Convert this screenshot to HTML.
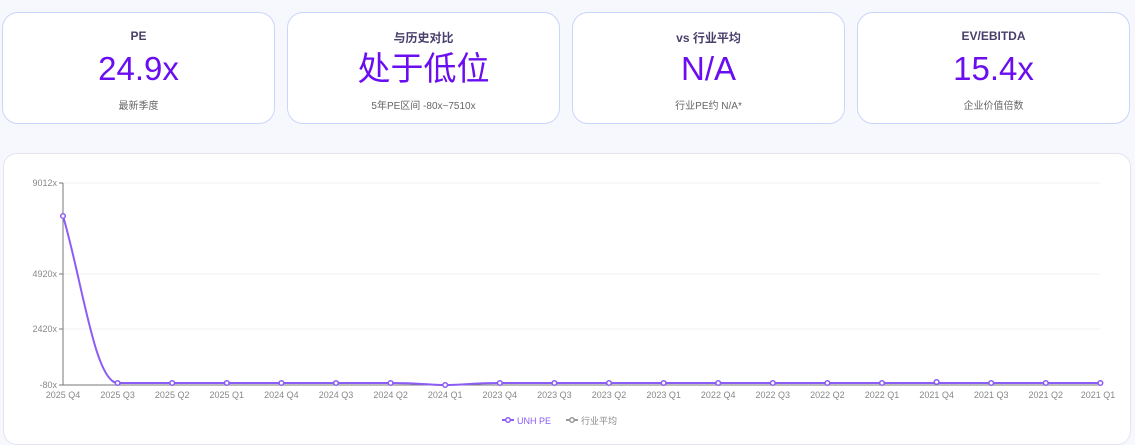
<!DOCTYPE html>
<html><head><meta charset="utf-8"><style>
body{margin:0;width:1135px;height:430px;background:#f7f8fd;font-family:"Liberation Sans","Noto Sans CJK SC",sans-serif;overflow:hidden;position:relative}
.card{position:absolute;top:12px;width:271px;height:110px;background:#fff;border:1px solid #c9d6fb;border-radius:16px;text-align:center}
.t{position:absolute;top:16px;left:0;right:0;font-size:12px;font-weight:bold;color:#4a3f6b}
.v{position:absolute;top:36px;left:0;right:0;font-size:33px;color:#6a0df0;line-height:40px}
.s{position:absolute;top:84px;left:0;right:0;font-size:10px;color:#666}
.chart{position:absolute;left:3px;top:153px;width:1126px;height:290px;background:#fff;border:1px solid #e2e5f0;border-radius:14px}
svg{position:absolute;left:0;top:0}
</style></head><body>
<div class="card" style="left:2px"><div class="t">PE</div><div class="v">24.9x</div><div class="s">最新季度</div></div>
<div class="card" style="left:287px"><div class="t">与历史对比</div><div class="v">处于低位</div><div class="s">5年PE区间 -80x~7510x</div></div>
<div class="card" style="left:572px"><div class="t">vs 行业平均</div><div class="v">N/A</div><div class="s">行业PE约 N/A*</div></div>
<div class="card" style="left:857px"><div class="t">EV/EBITDA</div><div class="v">15.4x</div><div class="s">企业价值倍数</div></div>
<div class="chart"></div>
<svg width="1135" height="430" font-family="Liberation Sans, Noto Sans CJK SC, sans-serif" font-size="9" fill="#888">
<g stroke="#f0f1f6" stroke-width="1">
<line x1="63" y1="183" x2="1100" y2="183"/><line x1="63" y1="274" x2="1100" y2="274"/><line x1="63" y1="329" x2="1100" y2="329"/>
</g>
<g stroke="#777" stroke-width="1">
<line x1="63" y1="183" x2="63" y2="385"/><line x1="63" y1="385" x2="1100" y2="385"/>
<line x1="59" y1="183" x2="63" y2="183"/><line x1="59" y1="274" x2="63" y2="274"/><line x1="59" y1="329" x2="63" y2="329"/><line x1="59" y1="385" x2="63" y2="385"/>
</g>
<g text-anchor="end"><text x="57" y="186">9012x</text><text x="57" y="277">4920x</text><text x="57" y="332">2420x</text><text x="57" y="388">-80x</text></g>
<g stroke="#777" id="ticks"></g>
<g text-anchor="middle" id="xl">
<text x="63" y="398">2025 Q4</text><text x="117.6" y="398">2025 Q3</text><text x="172.2" y="398">2025 Q2</text><text x="226.8" y="398">2025 Q1</text><text x="281.4" y="398">2024 Q4</text><text x="336" y="398">2024 Q3</text><text x="390.6" y="398">2024 Q2</text><text x="445.2" y="398">2024 Q1</text><text x="499.8" y="398">2023 Q4</text><text x="554.4" y="398">2023 Q3</text><text x="609" y="398">2023 Q2</text><text x="663.6" y="398">2023 Q1</text><text x="718.2" y="398">2022 Q4</text><text x="772.8" y="398">2022 Q3</text><text x="827.4" y="398">2022 Q2</text><text x="882" y="398">2022 Q1</text><text x="936.6" y="398">2021 Q4</text><text x="991.2" y="398">2021 Q3</text><text x="1045.8" y="398">2021 Q2</text><text x="1098" y="398">2021 Q1</text>
</g>
<path d="M63,216 C82,280 95,383 117.6,383 L390.6,383 C420,383 430,385 445.2,385 C460,385 475,383 499.8,383 L1100.4,383" fill="none" stroke="#8b5cf6" stroke-width="2"/>
<g fill="#fff" stroke="#8b5cf6" stroke-width="1.5">
<circle cx="63" cy="216" r="2.3"/><circle cx="117.6" cy="383" r="2.3"/><circle cx="172.2" cy="383" r="2.3"/><circle cx="226.8" cy="383" r="2.3"/><circle cx="281.4" cy="383" r="2.3"/><circle cx="336" cy="383" r="2.3"/><circle cx="390.6" cy="383" r="2.3"/><circle cx="445.2" cy="385" r="2.3"/><circle cx="499.8" cy="383" r="2.3"/><circle cx="554.4" cy="383" r="2.3"/><circle cx="609" cy="383" r="2.3"/><circle cx="663.6" cy="383" r="2.3"/><circle cx="718.2" cy="383" r="2.3"/><circle cx="772.8" cy="383" r="2.3"/><circle cx="827.4" cy="383" r="2.3"/><circle cx="882" cy="383" r="2.3"/><circle cx="936.6" cy="382" r="2.3"/><circle cx="991.2" cy="383" r="2.3"/><circle cx="1045.8" cy="383" r="2.3"/><circle cx="1100.4" cy="383" r="2.3"/>
</g>
<line x1="502" y1="420" x2="514" y2="420" stroke="#8b5cf6" stroke-width="2"/><circle cx="508" cy="420" r="2.3" fill="#fff" stroke="#8b5cf6" stroke-width="1.5"/>
<text x="517" y="424" fill="#8b5cf6">UNH PE</text>
<line x1="566" y1="420" x2="578" y2="420" stroke="#999" stroke-width="2"/><circle cx="572" cy="420" r="2.3" fill="#fff" stroke="#999" stroke-width="1.5"/>
<text x="581" y="424" fill="#888">行业平均</text>
</svg>
</body></html>
